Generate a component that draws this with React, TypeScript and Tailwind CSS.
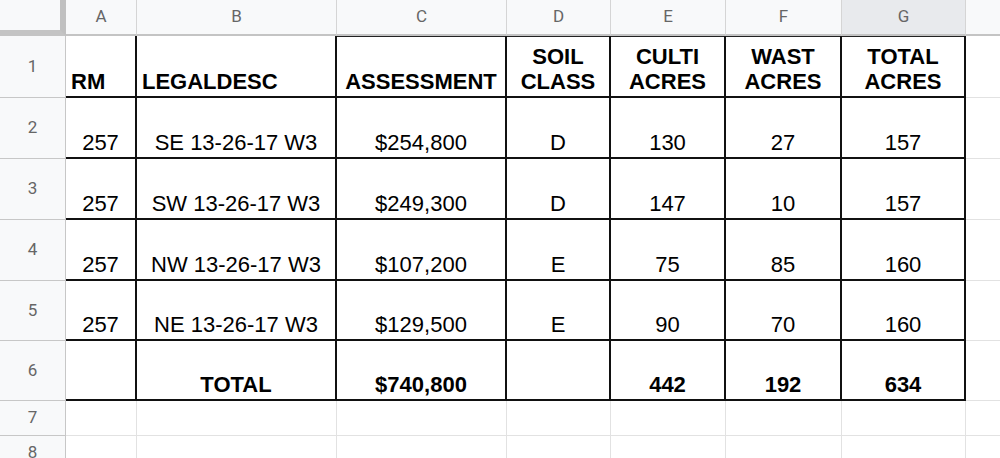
import React from "react";

type Align = "left" | "center";

interface Col {
  key: string;
  width: string;
}

const cols: Col[] = [
  { key: "A", width: "w-[71px]" },
  { key: "B", width: "w-[200px]" },
  { key: "C", width: "w-[170px]" },
  { key: "D", width: "w-[104px]" },
  { key: "E", width: "w-[115px]" },
  { key: "F", width: "w-[116px]" },
  { key: "G", width: "w-[124px]" },
];

interface Row {
  num: number;
  height: string;
  cells: { text: string[]; align: Align; bold?: boolean }[];
}

const c = (text: string, bold = false): { text: string[]; align: Align; bold?: boolean } => ({
  text: text.split("\n"),
  align: "center",
  bold,
});

const rows: Row[] = [
  {
    num: 1,
    height: "h-[62px]",
    cells: [
      { text: ["RM"], align: "left", bold: true },
      { text: ["LEGALDESC"], align: "left", bold: true },
      c("ASSESSMENT", true),
      c("SOIL\nCLASS", true),
      c("CULTI\nACRES", true),
      c("WAST\nACRES", true),
      c("TOTAL\nACRES", true),
    ],
  },
  {
    num: 2,
    height: "h-[61px]",
    cells: [c("257"), c("SE 13-26-17 W3"), c("$254,800"), c("D"), c("130"), c("27"), c("157")],
  },
  {
    num: 3,
    height: "h-[61px]",
    cells: [c("257"), c("SW 13-26-17 W3"), c("$249,300"), c("D"), c("147"), c("10"), c("157")],
  },
  {
    num: 4,
    height: "h-[61px]",
    cells: [c("257"), c("NW 13-26-17 W3"), c("$107,200"), c("E"), c("75"), c("85"), c("160")],
  },
  {
    num: 5,
    height: "h-[60px]",
    cells: [c("257"), c("NE 13-26-17 W3"), c("$129,500"), c("E"), c("90"), c("70"), c("160")],
  },
  {
    num: 6,
    height: "h-[60px]",
    cells: [c(""), c("TOTAL", true), c("$740,800", true), c(""), c("442", true), c("192", true), c("634", true)],
  },
];

const RowHeader: React.FC<{ n: number; height: string }> = ({ n, height }) => (
  <div
    className={`${height} w-[66px] shrink-0 flex items-center justify-center bg-[#f8f9fa] border-r border-b border-[#c7c7c7] text-[17px] text-[#666] font-['Roboto',sans-serif]`}
  >
    {n}
  </div>
);

export default function App() {
  return (
    <div className="w-[1000px] h-[458px] overflow-hidden bg-white font-['Liberation_Sans',Arial,sans-serif] text-black">
      {/* column headers */}
      <div className="flex h-[36px]">
        <div className="w-[66px] shrink-0 bg-[#f8f9fa] border-r-[6px] border-b-[6px] border-[#c4c4c4] border-r-[#c0c0c0]" />
        {cols.map((col) => (
          <div
            key={col.key}
            className={`${col.width} shrink-0 flex items-center justify-center border-r border-b-2 border-r-[#d5d5d5] border-b-[#c4c4c4] text-[17px] text-[#666] font-['Roboto',sans-serif] ${
              col.key === "G" ? "bg-[#e8eaed]" : "bg-[#f8f9fa]"
            }`}
          >
            {col.key}
          </div>
        ))}
        <div className="flex-1 bg-[#f8f9fa] border-b-2 border-[#c4c4c4]" />
      </div>

      {/* data rows */}
      {rows.map((row) => (
        <div key={row.num} className="flex">
          <RowHeader n={row.num} height={row.height} />
          {row.cells.map((cell, i) => (
            <div
              key={i}
              className={`${row.height} ${cols[i].width} shrink-0 flex flex-col justify-end pb-[2px] border-r-2 border-b-2 border-[#111] text-[22px] leading-[25px] ${
                cell.align === "left" ? "items-start pl-[5px]" : "items-center"
              } ${cell.bold ? "font-bold" : ""} ${
                row.num === 1 && i >= 2 ? "shadow-[inset_0_1px_0_#222]" : ""
              }`}
            >
              {cell.text.map((t, j) => (
                <span key={j} className="whitespace-nowrap">
                  {t}
                </span>
              ))}
            </div>
          ))}
          <div className={`${row.height} flex-1 border-b border-[#e2e2e2]`} />
        </div>
      ))}

      {/* empty rows */}
      {[7, 8].map((n) => (
        <div key={n} className="flex">
          <RowHeader n={n} height="h-[35px]" />
          {cols.map((col) => (
            <div key={col.key} className={`h-[35px] ${col.width} shrink-0 border-r border-b border-[#e2e2e2]`} />
          ))}
          <div className="h-[35px] flex-1 border-b border-[#e2e2e2]" />
        </div>
      ))}
    </div>
  );
}
